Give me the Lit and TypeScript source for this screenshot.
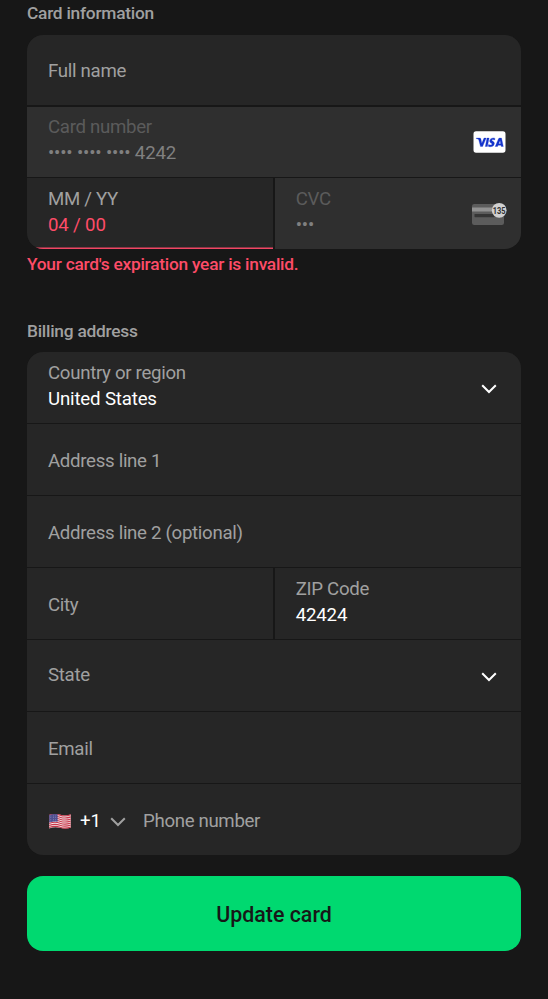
import { LitElement, html, css, svg, nothing } from "lit";
import { customElement, property } from "lit/decorators.js";

const chevron = html`<svg class="chevron" width="18" height="12" viewBox="0 0 18 12" aria-hidden="true">
  <path d="M2.2 2.2 L9 9 L15.8 2.2" fill="none" stroke="currentColor" stroke-width="2" />
</svg>`;

const visaMark = html`<svg width="33" height="22" viewBox="0 0 33 22" role="img" aria-label="Visa">
  <rect x="0.5" y="0.3" width="32" height="21.4" rx="2.6" fill="#fff" />
  <g fill="#1434cb" stroke="#1434cb" stroke-width="0.3">
    <path d="M3.2 7.1 H7 Q7.7 7.1 7.9 7.9 L8.8 12.3 L11 7.1 H13.2 L9.6 15.5 H7.5 L5.7 8.7 Q5.5 8.1 3.2 7.5 Z" />
    <path d="M14 7.1 H16.1 L14.4 15.5 H12.3 Z" />
    <path d="M22 7.4 L21.7 9 Q19 8 18.8 9.3 Q18.8 9.8 20.3 10.6 Q21.6 11.3 21.4 12.7 Q20.9 15.7 17.5 15.7 Q16.2 15.7 15.2 15.2 L15.6 13.5 Q18.7 14.7 19.1 13.1 Q19.1 12.6 17.9 12 Q16.4 11.2 16.7 9.6 Q17.2 7 20.1 6.9 Q21.3 6.9 22 7.4 Z" />
    <path fill-rule="evenodd" d="M26.6 7.1 H28.5 L30.3 15.5 H28.3 L28 14.2 H25 L24.5 15.5 H22.2 L25.5 7.8 Q25.8 7.1 26.6 7.1 Z M27.1 9.5 L25.7 12.7 H27.7 Z" />
  </g>
</svg>`;

const cvcMark = html`<svg class="cvc" width="36" height="24" viewBox="0 0 36 24" aria-hidden="true">
  <rect x="0" y="2" width="32" height="21" rx="2.2" fill="#5c5c5c" />
  <rect x="0" y="5.5" width="32" height="4" fill="#929292" />
  <rect x="2.5" y="12" width="20" height="3.2" rx="0.6" fill="#353535" />
  <circle cx="27.2" cy="8.3" r="7.4" fill="#d0d0d0" />
  <text x="20.8" y="11.7" textLength="12.8" lengthAdjust="spacingAndGlyphs" class="digits">135</text>
</svg>`;

const flagStripes = [0, 1, 2, 3, 4, 5, 6].map(
  (i) => svg`<path d="M0 ${1.4 + i * 2.15} Q6 ${-0.8 + i * 2.15} 11.5 ${1.2 + i * 2.15} T23 ${0.9 + i * 2.15}"
    fill="none" stroke="#c9384b" stroke-width="1.15" />`
);
const flagStars = [0, 1, 2, 3].flatMap((r) =>
  [0, 1, 2].map((c) => svg`<circle cx=${1.8 + c * 2.6} cy=${2.1 + r * 1.8} r="0.4" fill="#b9bbdc" />`)
);
const usFlag = html`<svg class="flag" width="22" height="16" viewBox="0 0 23 17" role="img" aria-label="United States">
  <path d="M0 1 Q6 -1 11.5 0.8 T23 0.5 V14.7 Q17 16.3 11.5 14.7 T0 15.3 Z" fill="#f1e9eb" />
  ${flagStripes}
  <path d="M0 1 Q5 -0.5 9 0.3 V8.2 Q5 7.7 0 9 Z" fill="#504f90" />
  ${flagStars}
</svg>`;

@customElement("form-field")
export class FormField extends LitElement {
  @property() label = "";
  @property() value = "";
  @property({ type: Boolean, reflect: true }) disabled = false;
  @property({ type: Boolean, reflect: true }) invalid = false;

  static styles = css`
    :host {
      display: flex;
      align-items: center;
      box-sizing: border-box;
      min-width: 0;
      padding: 0 15px 0 21px;
      background: #262626;
      color: #fff;
    }
    :host([disabled]) { background: #2f2f2f; color: #808080; }
    :host([invalid]) { box-shadow: inset 0 -1.6px #f14664; color: #fe4c68; }
    .texts {
      flex: 1;
      min-width: 0;
      line-height: 25.5px;
      white-space: nowrap;
      padding-top: var(--label-drop, 5px);
      letter-spacing: -0.17px;
    }
    .filled { padding-bottom: var(--value-lift, 2px); padding-top: 0; }
    .label { color: #a0a0a0; letter-spacing: -0.31px; }
    :host([disabled]) .label { color: #5b5b5b; }
  `;

  render() {
    return html`<div class="texts ${this.value ? "filled" : ""}">
        <div class="label">${this.label}</div>
        ${this.value ? html`<div>${this.value}</div>` : nothing}
      </div>
      <slot></slot>`;
  }
}

@customElement("app-root")
export class AppRoot extends LitElement {
  static styles = css`
    :host {
      display: block;
      box-sizing: border-box;
      height: 999px;
      padding: 0 27px;
      overflow: hidden;
      background: #171717;
      font: 400 18.67px Roboto, sans-serif;
      color: #fff;
    }
    .heading, .error {
      font-size: 17.33px;
      font-weight: 500;
      letter-spacing: -0.25px;
      line-height: 24px;
      color: #a0a0a0;
    }
    .heading { padding-top: 1px; height: 34px; box-sizing: border-box; }
    .error { color: #fe4c68; padding-top: 3px; height: 69px; box-sizing: border-box; }
    .group {
      display: grid;
      gap: 1.33px;
      overflow: hidden;
      border-radius: 16px;
      background: #171717;
    }
    .card { margin-top: 0.67px; height: 214.33px; grid-template-rows: repeat(3, 1fr); }
    .address { height: 503px; grid-template-rows: repeat(7, 1fr); --value-lift: 1px; }
    .pair { display: grid; grid-template-columns: 1fr 1fr; gap: 1.33px; }
    .name { --label-drop: 3px; }
    .state { --label-drop: 1px; }
    .phone {
      display: flex;
      align-items: center;
      padding-left: 22px;
      padding-top: 2px;
      background: #262626;
    }
    .code { margin: 0 8px 0 9px; }
    .number { margin-left: 16px; color: #a0a0a0; letter-spacing: -0.35px; }
    svg { display: block; flex: none; }
    .flag { margin-top: 2px; }
    .chevron { margin: 3px 8px 0 0; }
    .phone .chevron { margin: 2px 0 0; color: #a0a0a0; }
    .cvc { margin-right: -2px; overflow: visible; }
    .digits { font: 700 9.5px Roboto, sans-serif; fill: #303030; }
    .submit {
      display: block;
      width: 100%;
      height: 75px;
      margin: 21px 0 0;
      padding: 2px 0 0;
      border: 0;
      border-radius: 16px;
      background: #00d970;
      color: #171717;
      font: 500 21.4px Roboto, sans-serif;
    }
  `;

  render() {
    return html`
      <div class="heading">Card information</div>
      <div class="group card">
        <form-field class="name" label="Full name"></form-field>
        <form-field label="Card number" value="•••• •••• •••• 4242" disabled>${visaMark}</form-field>
        <div class="pair">
          <form-field label="MM / YY" value="04 / 00" invalid></form-field>
          <form-field label="CVC" value="•••" disabled>${cvcMark}</form-field>
        </div>
      </div>
      <div class="error">Your card's expiration year is invalid.</div>
      <div class="heading">Billing address</div>
      <div class="group address">
        <form-field label="Country or region" value="United States">${chevron}</form-field>
        <form-field label="Address line 1"></form-field>
        <form-field label="Address line 2 (optional)"></form-field>
        <div class="pair">
          <form-field label="City"></form-field>
          <form-field label="ZIP Code" value="42424"></form-field>
        </div>
        <form-field class="state" label="State">${chevron}</form-field>
        <form-field label="Email"></form-field>
        <div class="phone">
          ${usFlag}<span class="code">+1</span>${chevron}<span class="number">Phone number</span>
        </div>
      </div>
      <button class="submit">Update card</button>
    `;
  }
}
